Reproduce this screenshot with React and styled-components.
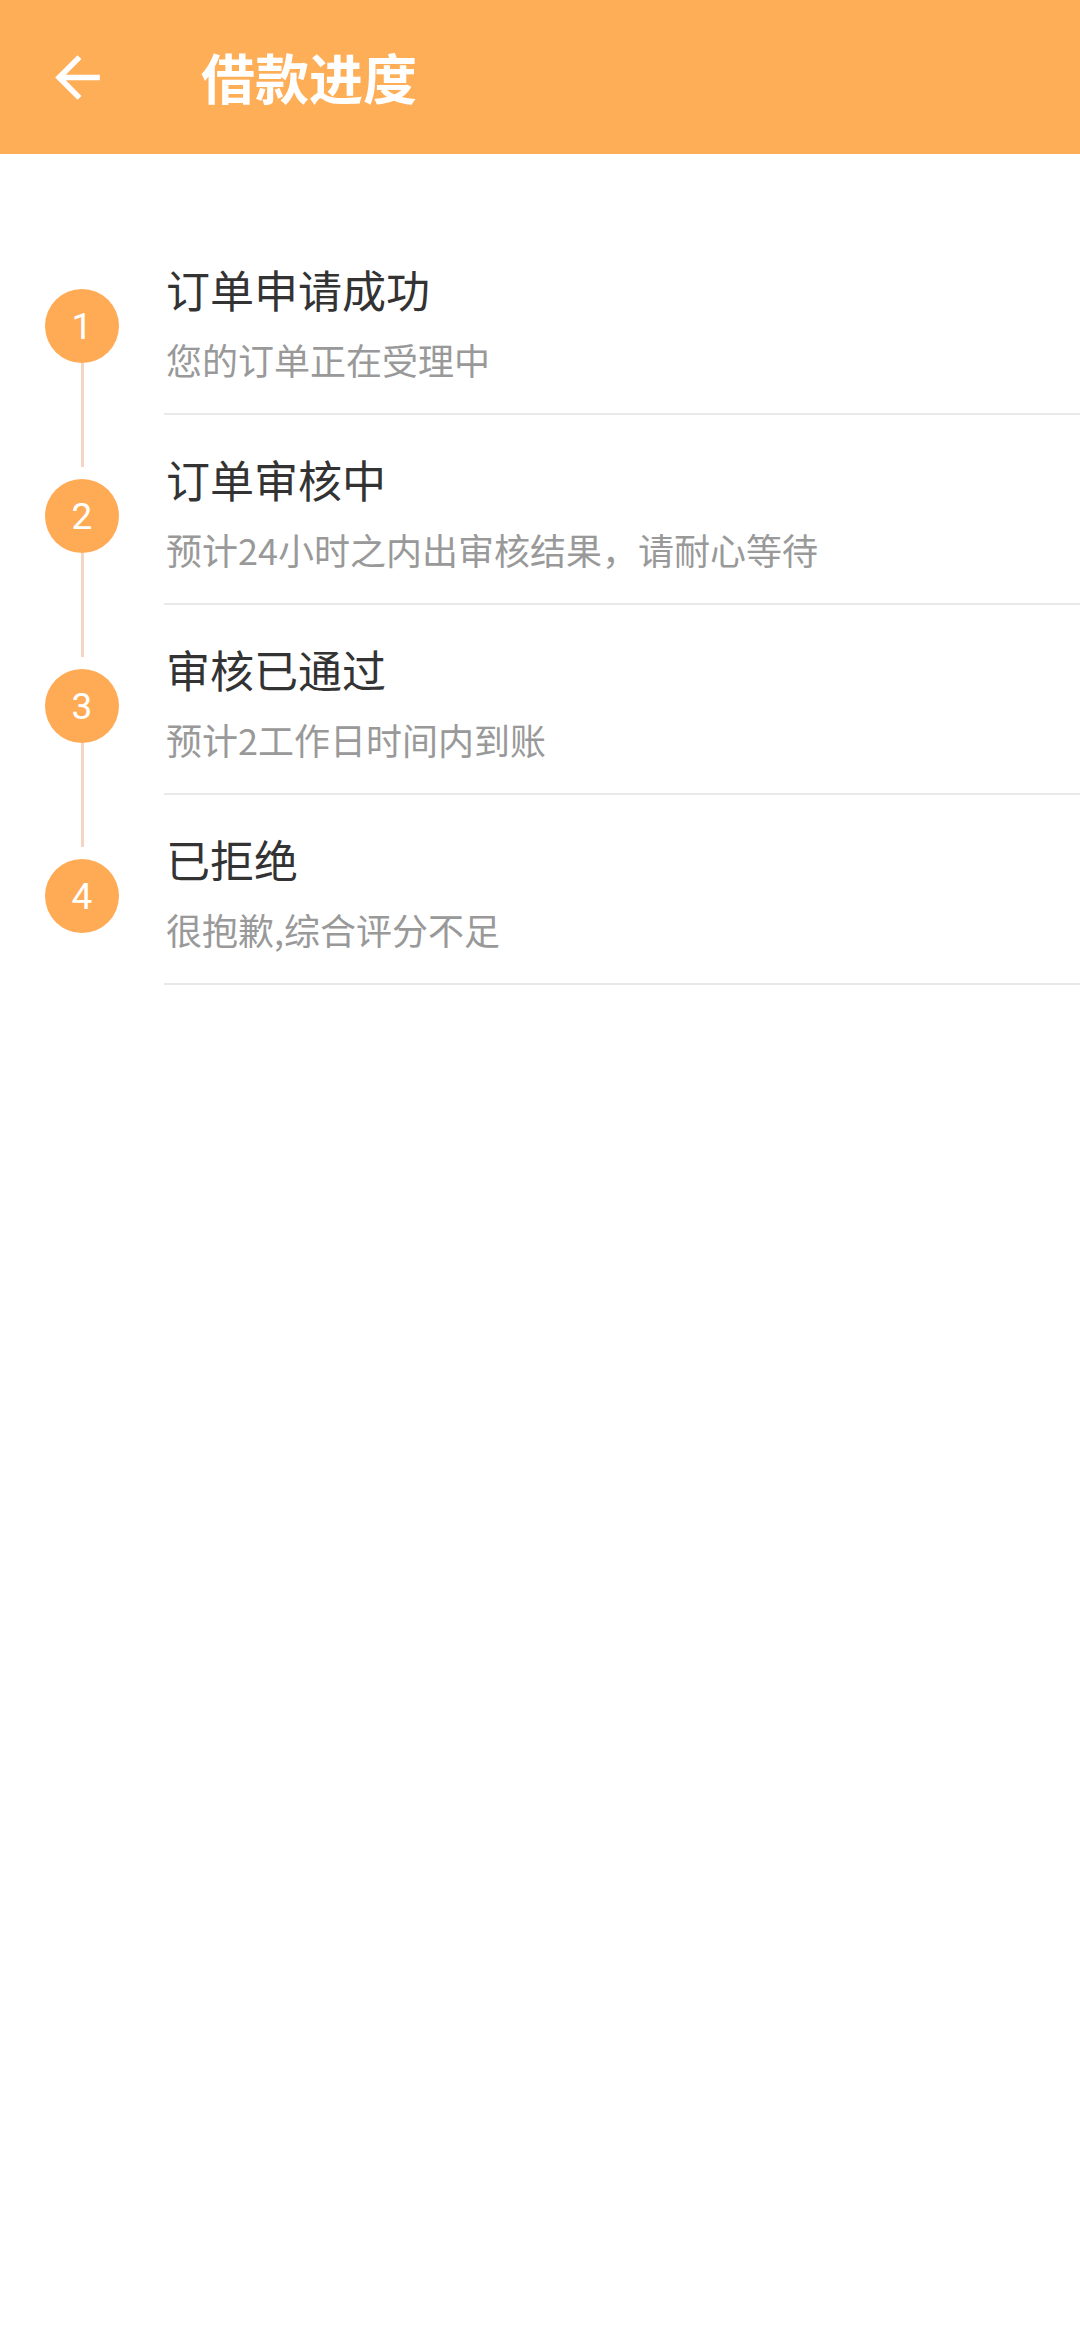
import React from 'react';
import styled, { createGlobalStyle } from 'styled-components';

const GlobalStyle = createGlobalStyle`
  html, body {
    margin: 0;
    padding: 0;
    background: #ffffff;
  }
  body {
    font-family: 'Noto Sans CJK SC', 'Noto Sans', sans-serif;
  }
`;

const Page = styled.div`
  width: 1080px;
  min-height: 2340px;
  background: #ffffff;
`;

const Header = styled.header`
  height: 154px;
  background: #ffae58;
  display: flex;
  align-items: center;
  padding-left: 44px;
  box-sizing: border-box;
`;

const BackButton = styled.button`
  width: 67px;
  height: 67px;
  padding: 0;
  border: none;
  background: transparent;
  display: flex;
  align-items: center;
  justify-content: center;
  cursor: pointer;
`;

const Title = styled.h1`
  margin: 0 0 0 90px;
  color: #ffffff;
  font-size: 54px;
  font-weight: 700;
  line-height: 1;
`;

const List = styled.ul`
  list-style: none;
  margin: 71px 0 0;
  padding: 0;
`;

const Row = styled.li`
  display: flex;
  height: 190px;
`;

const Rail = styled.div`
  width: 164px;
  flex-shrink: 0;
  display: flex;
  flex-direction: column;
  align-items: center;
`;

const Segment = styled.div`
  flex: 1;
  width: 3px;
  background: ${(props) => (props.$off ? 'transparent' : '#f4d5c3')};
`;

const Circle = styled.div`
  width: 74px;
  height: 74px;
  margin-top: 12px;
  border-radius: 50%;
  background: #ffab55;
  color: #ffffff;
  font-family: 'Roboto', 'Liberation Sans', sans-serif;
  font-size: 37px;
  display: flex;
  align-items: center;
  justify-content: center;
  flex-shrink: 0;
`;

const Content = styled.div`
  flex: 1;
  display: flex;
  flex-direction: column;
  padding-top: 38px;
  border-bottom: 2px solid #e9e9e9;
  box-sizing: border-box;
`;

const StepTitle = styled.div`
  padding-left: 2px;
  font-size: 44px;
  line-height: 52px;
  color: #333333;
`;

const StepDesc = styled.div`
  margin-top: 23px;
  padding-left: 2px;
  font-size: 36px;
  line-height: 42px;
  color: #999999;
`;

const steps = [
  { title: '订单申请成功', desc: '您的订单正在受理中' },
  { title: '订单审核中', desc: '预计24小时之内出审核结果，请耐心等待' },
  { title: '审核已通过', desc: '预计2工作日时间内到账' },
  { title: '已拒绝', desc: '很抱歉,综合评分不足' },
];

const App = () => (
  <Page>
    <GlobalStyle />
    <Header>
      <BackButton aria-label="返回">
        <svg width="67" height="67" viewBox="0 0 24 24" fill="#ffffff">
          <path d="M20 11H7.83l5.59-5.59L12 4l-8 8 8 8 1.41-1.41L7.83 13H20v-2z" />
        </svg>
      </BackButton>
      <Title>借款进度</Title>
    </Header>
    <List>
      {steps.map((step, i) => (
        <Row key={step.title}>
          <Rail>
            <Segment $off={i === 0} />
            <Circle>{i + 1}</Circle>
            <Segment $off={i === steps.length - 1} />
          </Rail>
          <Content>
            <StepTitle>{step.title}</StepTitle>
            <StepDesc>{step.desc}</StepDesc>
          </Content>
        </Row>
      ))}
    </List>
  </Page>
);

export default App;
